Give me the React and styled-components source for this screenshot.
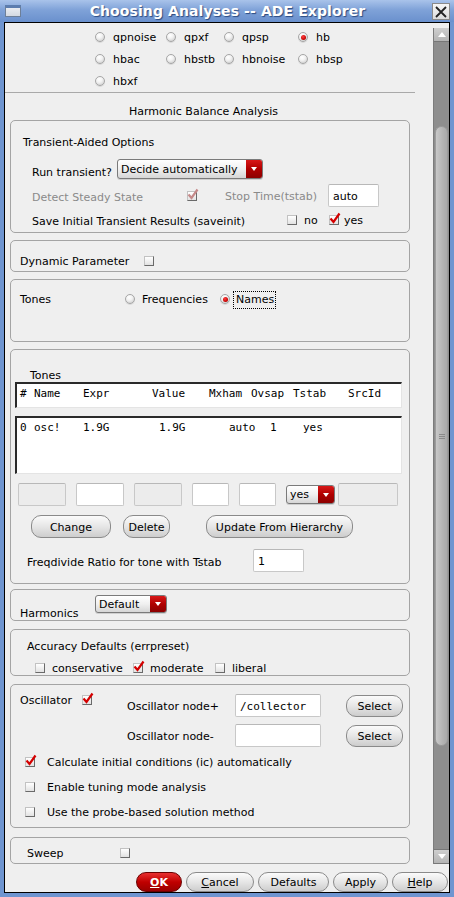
import React from "react";
import styled, { createGlobalStyle } from "styled-components";

const GlobalStyle = createGlobalStyle`
  html, body {
    margin: 0;
    padding: 0;
  }
  body {
    width: 454px;
    height: 897px;
    overflow: hidden;
    font-family: "DejaVu Sans", "Noto Sans", sans-serif;
    font-size: 11px;
    color: #000;
  }
`;

const Window = styled.div`
  width: 454px;
  height: 897px;
  box-sizing: border-box;
  display: flex;
  flex-direction: column;
  background: #6f95d0;
`;

const TitleBar = styled.div`
  height: 22px;
  flex: none;
  display: flex;
  align-items: center;
  background: linear-gradient(#a9c3ea, #7fa2d8 45%, #6a90cd);
  padding: 0 4px 0 5px;
`;

const WinIcon = styled.div`
  width: 16px;
  height: 12px;
  box-sizing: border-box;
  border: 1px solid #6d7f98;
  border-top: 3px solid #5c7daf;
  background: linear-gradient(#e9ecf1, #d3d9e2);
`;

const Title = styled.div`
  flex: 1;
  text-align: center;
  color: #fff;
  font-weight: bold;
  font-size: 14px;
  letter-spacing: 0.1px;
  text-shadow: 1px 1px 1px #2b4a80;
  padding-left: 2px;
`;

const CloseBtn = styled.div`
  width: 18px;
  height: 17px;
  box-sizing: border-box;
  border: 1px solid #8a8a8a;
  background: linear-gradient(#f6f6f6, #dcdcdc);
  display: flex;
  align-items: center;
  justify-content: center;
  margin-top: 1px;
`;

const Frame = styled.div`
  flex: 1;
  margin: 0 4px 4px 4px;
  border: 1px solid #000;
  background: #efefef;
  display: flex;
  flex-direction: column;
  min-height: 0;
`;

const Main = styled.div`
  flex: 1;
  display: flex;
  min-height: 0;
`;

const Content = styled.div`
  width: 428px;
  overflow: hidden;
  padding-top: 3px;
`;

const ScrollBar = styled.div`
  width: 16px;
  height: 836px;
  margin-top: 5px;
  display: flex;
  flex-direction: column;
  background: #8e8e8e;
  box-sizing: border-box;
  border-left: 1px solid #7c7c7c;
`;

const Arrow = styled.div`
  height: 13px;
  flex: none;
  background: linear-gradient(#cfcfcf, #b4b4b4);
  border-bottom: 1px solid #777;
  border-top: ${(p) => (p.$down ? "1px solid #777" : "none")};
  display: flex;
  align-items: center;
  justify-content: center;
`;

const Track = styled.div`
  flex: 1;
  padding: 84px 1px 0 1px;
`;

const Thumb = styled.div`
  height: 620px;
  box-sizing: border-box;
  border: 1px solid #9c9c9c;
  border-radius: 7px;
  background: linear-gradient(90deg, #c8c8c8, #b4b4b4 60%, #a9a9a9);
  display: flex;
  align-items: center;
  justify-content: center;
`;

const Grip = styled.div`
  width: 6px;
  height: 5px;
  background: repeating-linear-gradient(#8a8a8a 0 1px, transparent 1px 2px);
`;

const ButtonBar = styled.div`
  height: 24px;
  flex: none;
  display: flex;
  justify-content: flex-end;
  align-items: flex-end;
  gap: 4px;
  padding-right: 1px;
`;

const PushButton = styled.div`
  width: ${(p) => p.$w}px;
  height: ${(p) => p.$h || 20}px;
  box-sizing: border-box;
  border: 1px solid ${(p) => (p.$primary ? "#6a0000" : "#8a8a8a")};
  border-radius: 10px;
  background: ${(p) =>
    p.$primary
      ? "linear-gradient(#e83030, #c00000 50%, #9a0000)"
      : "linear-gradient(#fbfbfb, #e6e6e6 50%, #cdcdcd)"};
  color: ${(p) => (p.$primary ? "#fff" : "#000")};
  font-weight: ${(p) => (p.$primary ? "bold" : "normal")};
  display: flex;
  align-items: center;
  justify-content: center;
  padding-top: 1px;
  flex: none;
  u {
    text-decoration: underline;
  }
`;

const RadioGrid = styled.div`
  display: grid;
  grid-template-columns: 71px 58px 74px 80px;
  grid-auto-rows: 22px;
  margin-left: 90px;
`;

const OptionRow = styled.label`
  display: flex;
  align-items: center;
  gap: ${(p) => (p.$gap != null ? p.$gap : 8)}px;
  width: ${(p) => (p.$w ? `${p.$w}px` : "auto")};
  flex: none;
`;

const OptText = styled.span`
  line-height: 12px;
  padding-top: 2px;
  white-space: nowrap;
`;

const Option = ({ control, children, ...rest }) => (
  <OptionRow {...rest}>
    {control}
    <OptText>{children}</OptText>
  </OptionRow>
);

const RadioDot = styled.span`
  width: 10px;
  height: 10px;
  box-sizing: border-box;
  border-radius: 50%;
  border: 1px solid #a6a6a6;
  background: radial-gradient(circle at 40% 30%, #ffffff 0, #f2f2f2 40%, #c4c4c4 100%);
  box-shadow: 0 1px 0 #dadada;
  display: flex;
  align-items: center;
  justify-content: center;
  flex: none;
  &::after {
    content: "";
    display: ${(p) => (p.$on ? "block" : "none")};
    width: 5px;
    height: 5px;
    border-radius: 50%;
    background: radial-gradient(circle at 40% 35%, #ff4040, #c00000 70%, #800000);
  }
`;

const Separator = styled.div`
  width: 410px;
  height: 1px;
  background: #a9a9a9;
`;

const Heading = styled.div`
  margin-top: 11px;
  padding: 2px 0 0 124px;
  line-height: 12px;
`;

const Group = styled.div`
  margin: ${(p) => p.$mt}px 0 0 5px;
  width: 400px;
  height: ${(p) => p.$h}px;
  box-sizing: border-box;
  border: 1px solid #a4a4a4;
  border-radius: 5px;
  padding: ${(p) => p.$pad || "0"};
  overflow: hidden;
`;

const Label = styled.div`
  line-height: 12px;
  padding-top: 2px;
  margin-top: ${(p) => p.$mt || 0}px;
  padding-left: ${(p) => p.$pl || 0}px;
  width: ${(p) => (p.$w ? `${p.$w}px` : "auto")};
  color: ${(p) => (p.$disabled ? "#8a8a8a" : "#000")};
  flex: none;
  white-space: nowrap;
`;

const Row = styled.div`
  display: flex;
  align-items: ${(p) => p.$align || "center"};
  height: ${(p) => p.$h}px;
  margin-top: ${(p) => p.$mt || 0}px;
  padding-left: ${(p) => p.$pl || 0}px;
  gap: ${(p) => p.$gap || 0}px;
`;

const BoxWrap = styled.span`
  position: relative;
  display: inline-block;
  width: 10px;
  height: 10px;
  flex: none;
`;

const Box = styled.span`
  display: block;
  width: 10px;
  height: 10px;
  box-sizing: border-box;
  border: 1px solid;
  border-color: #c2c2c2 #6a6a6a #6a6a6a #c2c2c2;
  background: linear-gradient(#ffffff, #e2e2e2);
`;

const Tick = styled.svg`
  position: absolute;
  left: 0;
  top: -3px;
`;

const Checkbox = ({ on, disabled }) => (
  <BoxWrap>
    <Box />
    {on && (
      <Tick width="12" height="12" viewBox="0 0 12 12">
        <path
          d="M1.5 6.5 L4.5 10 L10.5 1.5"
          fill="none"
          stroke={disabled ? "#c58a8a" : "#d40000"}
          strokeWidth="2.2"
        />
      </Tick>
    )}
  </BoxWrap>
);

const Combo = styled.div`
  display: flex;
  width: ${(p) => p.$w}px;
  height: ${(p) => p.$h}px;
  box-sizing: border-box;
  border: 1px solid #7a7a7a;
  border-radius: 3px;
  overflow: hidden;
  background: linear-gradient(#ffffff, #f0f0f0 50%, #d6d6d6);
  flex: none;
  box-shadow: 0 1px 0 #cfcfcf;
`;

const ComboText = styled.span`
  flex: 1;
  padding-left: 3px;
  display: flex;
  align-items: center;
  font-size: 11px;
`;

const ComboArrow = styled.span`
  width: 16px;
  background: linear-gradient(#d81818, #b00000 50%, #8c0000);
  display: flex;
  align-items: center;
  justify-content: center;
  &::after {
    content: "";
    border-left: 3.5px solid transparent;
    border-right: 3.5px solid transparent;
    border-top: 4px solid #fff;
  }
`;

const Field = styled.div`
  width: ${(p) => p.$w}px;
  height: 23px;
  box-sizing: border-box;
  border: 1px solid #c8c8c8;
  border-top-color: #b8b8b8;
  border-radius: 2px;
  background: ${(p) => (p.$disabled ? "#ececec" : "#ffffff")};
  padding: 1px 0 0 4px;
  display: flex;
  align-items: center;
  font-family: ${(p) => (p.$mono ? '"DejaVu Sans Mono", monospace' : "inherit")};
  flex: none;
  margin-left: ${(p) => p.$ml || 0}px;
`;

const Focus = styled.span`
  border: 1px dotted #000;
  padding: 1px 1px 2px 2px;
`;

const List = styled.div`
  width: 387px;
  height: ${(p) => p.$h}px;
  margin-top: ${(p) => p.$mt}px;
  box-sizing: border-box;
  background: #fff;
  border-top: 2px solid #2a2a2a;
  border-left: 2px solid #2a2a2a;
  border-right: 1px solid #e4e4e4;
  border-bottom: 1px solid #e4e4e4;
  padding: 3px 0 0 3px;
  font-family: "DejaVu Sans Mono", "Liberation Mono", monospace;
  font-size: 11px;
`;

const ListRow = styled.div`
  display: flex;
  line-height: 14px;
  white-space: pre;
`;

const Cell = styled.span`
  width: ${(p) => (p.$w ? `${p.$w}px` : "auto")};
  flex: none;
`;

const headCols = [
  ["#", 14],
  ["Name", 49],
  ["Expr", 69],
  ["Value", 57],
  ["Mxham", 42],
  ["Ovsap", 42],
  ["Tstab", 55],
  ["SrcId", 0],
];

const dataCols = [
  ["0", 14],
  ["osc!", 49],
  ["1.9G", 76],
  ["1.9G", 70],
  ["auto", 41],
  ["1", 33],
  ["yes", 0],
];

const OscTop = styled.div`
  display: flex;
  align-items: flex-start;
  padding: 8px 0 0 9px;
`;

const OscLeft = styled.div`
  width: 107px;
  display: flex;
  align-items: center;
  flex: none;
`;

const OscRight = styled.div`
  display: flex;
  flex-direction: column;
  gap: 7px;
  margin-top: 1px;
`;

const analyses = [
  "qpnoise", "qpxf", "qpsp", "hb",
  "hbac", "hbstb", "hbnoise", "hbsp",
  "hbxf",
];

export default function App() {
  return (
    <>
      <GlobalStyle />
      <Window>
        <TitleBar>
          <WinIcon />
          <Title>Choosing Analyses -- ADE Explorer</Title>
          <CloseBtn>
            <svg width="14" height="14" viewBox="0 0 14 14">
              <path d="M2 2 L12 12 M12 2 L2 12" stroke="#222" strokeWidth="1.8" />
            </svg>
          </CloseBtn>
        </TitleBar>
        <Frame>
          <Main>
            <Content>
              <RadioGrid>
                {analyses.map((a) => (
                  <Option key={a} control={<RadioDot $on={a === "hb"} />}>
                    {a}
                  </Option>
                ))}
              </RadioGrid>
              <Separator />
              <Heading>Harmonic Balance Analysis</Heading>

              <Group $mt={2} $h={113} $pad="0 0 0 12px">
                <Label $mt={12} style={{ lineHeight: "16px" }}>Transient-Aided Options</Label>
                <Row $h={20} $mt={8} $pl={9} $align="flex-start">
                  <Label $w={85} $mt={6}>Run transient?</Label>
                  <Combo $w={146} $h={20}>
                    <ComboText>Decide automatically</ComboText>
                    <ComboArrow />
                  </Combo>
                </Row>
                <Row $h={23} $mt={5} $pl={9}>
                  <Label $w={155} $disabled $mt={2}>Detect Steady State</Label>
                  <Checkbox on disabled />
                  <Label $w={103} $disabled style={{ marginLeft: 28 }}>Stop Time(tstab)</Label>
                  <Field $w={51}>auto</Field>
                </Row>
                <Row $h={18} $mt={4} $pl={9}>
                  <Label $w={255} $mt={1}>Save Initial Transient Results (saveinit)</Label>
                  <Option $w={42} $gap={7} control={<Checkbox />}>no</Option>
                  <Option $gap={5} control={<Checkbox on />}>yes</Option>
                </Row>
              </Group>

              <Group $mt={7} $h={32} $pad="13px 0 0 9px">
                <Row $h={14}>
                  <Label $w={124}>Dynamic Parameter</Label>
                  <Checkbox />
                </Row>
              </Group>

              <Group $mt={7} $h={63} $pad="10px 0 0 9px">
                <Row $h={18}>
                  <Label $w={105}>Tones</Label>
                  <Option $w={95} $gap={7} control={<RadioDot />}>Frequencies</Option>
                  <Option $gap={3} control={<RadioDot $on />}>
                    <Focus>Names</Focus>
                  </Option>
                </Row>
              </Group>

              <Group $mt={7} $h={235} $pad="0 0 0 4px">
                <Label $mt={18} $pl={15}>Tones</Label>
                <List $h={26} $mt={0}>
                  <ListRow>
                    {headCols.map(([t, w]) => (
                      <Cell key={t} $w={w}>{t}</Cell>
                    ))}
                  </ListRow>
                </List>
                <List $h={58} $mt={8}>
                  <ListRow>
                    {dataCols.map(([t, w], i) => (
                      <Cell key={i} $w={w}>{t}</Cell>
                    ))}
                  </ListRow>
                </List>
                <Row $h={23} $mt={9} $pl={3} $gap={10}>
                  <Field $w={48} $disabled />
                  <Field $w={48} />
                  <Field $w={48} $disabled />
                  <Field $w={37} />
                  <Field $w={37} />
                  <Combo $w={49} $h={19}>
                    <ComboText>yes</ComboText>
                    <ComboArrow />
                  </Combo>
                  <Field $w={60} $disabled $ml={-7} />
                </Row>
                <Row $h={23} $mt={9} $pl={16}>
                  <PushButton $w={80} $h={23}>Change</PushButton>
                  <PushButton $w={47} $h={23} style={{ marginLeft: 12 }}>Delete</PushButton>
                  <PushButton $w={147} $h={23} style={{ marginLeft: 36 }}>Update From Hierarchy</PushButton>
                </Row>
                <Row $h={23} $mt={11} $pl={12}>
                  <Label $w={226} $mt={3}>Freqdivide Ratio for tone with Tstab</Label>
                  <Field $w={51}>1</Field>
                </Row>
              </Group>

              <Group $mt={5} $h={32} $pad="5px 0 0 9px">
                <Row $h={18} $align="flex-start">
                  <Label $w={75} $mt={11}>Harmonics</Label>
                  <Combo $w={72} $h={18}>
                    <ComboText>Default</ComboText>
                    <ComboArrow />
                  </Combo>
                </Row>
              </Group>

              <Group $mt={8} $h={47} $pad="0 0 0 16px">
                <Label $mt={9}>Accuracy Defaults (errpreset)</Label>
                <Row $h={14} $mt={8} $pl={8}>
                  <Option $w={98} $gap={7} control={<Checkbox />}>conservative</Option>
                  <Option $w={82} $gap={7} control={<Checkbox on />}>moderate</Option>
                  <Option $gap={7} control={<Checkbox />}>liberal</Option>
                </Row>
              </Group>

              <Group $mt={8} $h={144}>
                <OscTop>
                  <OscLeft>
                    <Label $w={62}>Oscillator</Label>
                    <Checkbox on />
                  </OscLeft>
                  <OscRight>
                    <Row $h={23}>
                      <Label $w={108}>Oscillator node+</Label>
                      <Field $w={86} $mono>/collector</Field>
                      <PushButton $w={57} $h={22} style={{ marginLeft: 25 }}>Select</PushButton>
                    </Row>
                    <Row $h={23}>
                      <Label $w={108}>Oscillator node-</Label>
                      <Field $w={86} />
                      <PushButton $w={57} $h={22} style={{ marginLeft: 25 }}>Select</PushButton>
                    </Row>
                  </OscRight>
                </OscTop>
                <Row $h={14} $mt={8} $pl={14} $gap={12}>
                  <Checkbox on />
                  <Label>Calculate initial conditions (ic) automatically</Label>
                </Row>
                <Row $h={14} $mt={11} $pl={14} $gap={12}>
                  <Checkbox />
                  <Label>Enable tuning mode analysis</Label>
                </Row>
                <Row $h={14} $mt={11} $pl={14} $gap={12}>
                  <Checkbox />
                  <Label>Use the probe-based solution method</Label>
                </Row>
              </Group>

              <Group $mt={9} $h={27} $pad="8px 0 0 16px">
                <Row $h={14}>
                  <Label $w={93}>Sweep</Label>
                  <Checkbox />
                </Row>
              </Group>
            </Content>
            <ScrollBar>
              <Arrow>
                <svg width="8" height="5" viewBox="0 0 8 5">
                  <path d="M0 5 L4 0 L8 5 Z" fill="#fff" />
                </svg>
              </Arrow>
              <Track>
                <Thumb>
                  <Grip />
                </Thumb>
              </Track>
              <Arrow $down>
                <svg width="8" height="5" viewBox="0 0 8 5">
                  <path d="M0 0 L8 0 L4 5 Z" fill="#fff" />
                </svg>
              </Arrow>
            </ScrollBar>
          </Main>
          <ButtonBar>
            <PushButton $w={46} $primary><u>O</u>K</PushButton>
            <PushButton $w={68}><u>C</u>ancel</PushButton>
            <PushButton $w={71}>Defaults</PushButton>
            <PushButton $w={55}>Apply</PushButton>
            <PushButton $w={56}><u>H</u>elp</PushButton>
          </ButtonBar>
        </Frame>
      </Window>
    </>
  );
}
